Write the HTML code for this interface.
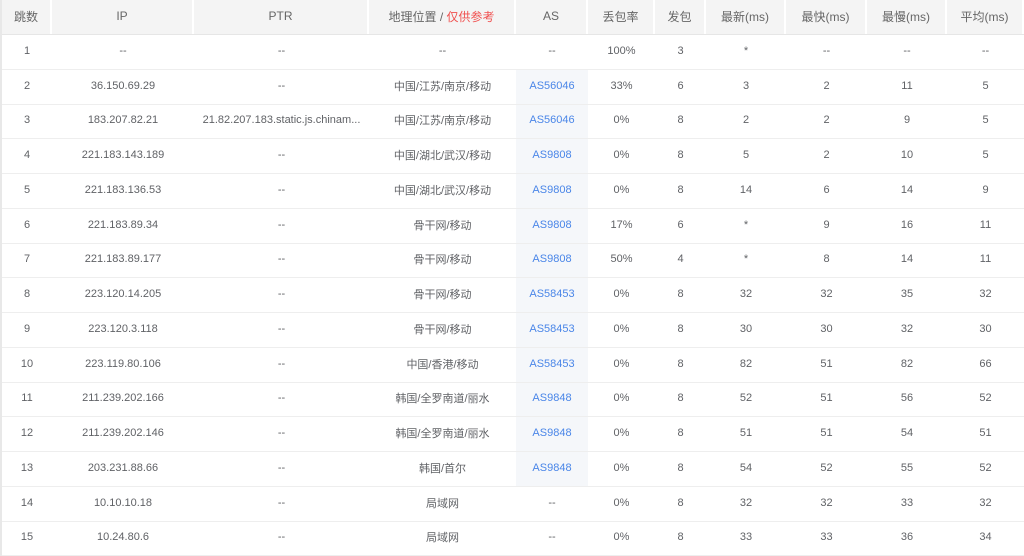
<!DOCTYPE html>
<html><head><meta charset="utf-8"><style>
body{margin:0;width:1024px;height:548px;overflow:hidden;background:#fff;font-family:"Liberation Sans","Noto Sans CJK SC",sans-serif;font-size:11px;color:#606266;}
.t{position:absolute;left:0;top:0;width:1024px;border-left:2px solid #e8e8e8;box-sizing:border-box}
.r{display:flex;height:34.75px;border-bottom:1px solid #eee;box-sizing:border-box;align-items:stretch}
.h{height:35px;background:#f4f4f4;color:#666;font-size:12px;border-bottom:1px solid #e6e6e6}
.r>div{display:flex;align-items:center;justify-content:center;box-sizing:border-box;white-space:nowrap;overflow:hidden;line-height:14px;padding-bottom:2px}
.r>div.cj{padding-bottom:0}
.h>div{border-right:2px solid #fff}
.c0{width:50px}.c1{width:142px}.c2{width:175px}.c3{width:147px}.c4{width:72px}.c5{width:67px}.c6{width:51px}.c7{width:80px}.c8{width:81px}.c9{width:80px}.c10{flex:1}
.as{background:#f5f7fa;color:#4a86e8}
.red{color:#f0504f}
</style></head><body><div class="t">
<div class="r h"><div class="c0 cj">跳数</div><div class="c1">IP</div><div class="c2">PTR</div><div class="c3 cj">地理位置&nbsp;/&nbsp;<span class="red">仅供参考</span></div><div class="c4">AS</div><div class="c5 cj">丢包率</div><div class="c6 cj">发包</div><div class="c7 cj">最新(ms)</div><div class="c8 cj">最快(ms)</div><div class="c9 cj">最慢(ms)</div><div class="c10 cj">平均(ms)</div></div>
<div class="r"><div class="c0">1</div><div class="c1">--</div><div class="c2">--</div><div class="c3">--</div><div class="c4">--</div><div class="c5">100%</div><div class="c6">3</div><div class="c7">*</div><div class="c8">--</div><div class="c9">--</div><div class="c10">--</div></div>
<div class="r"><div class="c0">2</div><div class="c1">36.150.69.29</div><div class="c2">--</div><div class="c3 cj">中国/江苏/南京/移动</div><div class="c4 as">AS56046</div><div class="c5">33%</div><div class="c6">6</div><div class="c7">3</div><div class="c8">2</div><div class="c9">11</div><div class="c10">5</div></div>
<div class="r"><div class="c0">3</div><div class="c1">183.207.82.21</div><div class="c2">21.82.207.183.static.js.chinam...</div><div class="c3 cj">中国/江苏/南京/移动</div><div class="c4 as">AS56046</div><div class="c5">0%</div><div class="c6">8</div><div class="c7">2</div><div class="c8">2</div><div class="c9">9</div><div class="c10">5</div></div>
<div class="r"><div class="c0">4</div><div class="c1">221.183.143.189</div><div class="c2">--</div><div class="c3 cj">中国/湖北/武汉/移动</div><div class="c4 as">AS9808</div><div class="c5">0%</div><div class="c6">8</div><div class="c7">5</div><div class="c8">2</div><div class="c9">10</div><div class="c10">5</div></div>
<div class="r"><div class="c0">5</div><div class="c1">221.183.136.53</div><div class="c2">--</div><div class="c3 cj">中国/湖北/武汉/移动</div><div class="c4 as">AS9808</div><div class="c5">0%</div><div class="c6">8</div><div class="c7">14</div><div class="c8">6</div><div class="c9">14</div><div class="c10">9</div></div>
<div class="r"><div class="c0">6</div><div class="c1">221.183.89.34</div><div class="c2">--</div><div class="c3 cj">骨干网/移动</div><div class="c4 as">AS9808</div><div class="c5">17%</div><div class="c6">6</div><div class="c7">*</div><div class="c8">9</div><div class="c9">16</div><div class="c10">11</div></div>
<div class="r"><div class="c0">7</div><div class="c1">221.183.89.177</div><div class="c2">--</div><div class="c3 cj">骨干网/移动</div><div class="c4 as">AS9808</div><div class="c5">50%</div><div class="c6">4</div><div class="c7">*</div><div class="c8">8</div><div class="c9">14</div><div class="c10">11</div></div>
<div class="r"><div class="c0">8</div><div class="c1">223.120.14.205</div><div class="c2">--</div><div class="c3 cj">骨干网/移动</div><div class="c4 as">AS58453</div><div class="c5">0%</div><div class="c6">8</div><div class="c7">32</div><div class="c8">32</div><div class="c9">35</div><div class="c10">32</div></div>
<div class="r"><div class="c0">9</div><div class="c1">223.120.3.118</div><div class="c2">--</div><div class="c3 cj">骨干网/移动</div><div class="c4 as">AS58453</div><div class="c5">0%</div><div class="c6">8</div><div class="c7">30</div><div class="c8">30</div><div class="c9">32</div><div class="c10">30</div></div>
<div class="r"><div class="c0">10</div><div class="c1">223.119.80.106</div><div class="c2">--</div><div class="c3 cj">中国/香港/移动</div><div class="c4 as">AS58453</div><div class="c5">0%</div><div class="c6">8</div><div class="c7">82</div><div class="c8">51</div><div class="c9">82</div><div class="c10">66</div></div>
<div class="r"><div class="c0">11</div><div class="c1">211.239.202.166</div><div class="c2">--</div><div class="c3 cj">韩国/全罗南道/丽水</div><div class="c4 as">AS9848</div><div class="c5">0%</div><div class="c6">8</div><div class="c7">52</div><div class="c8">51</div><div class="c9">56</div><div class="c10">52</div></div>
<div class="r"><div class="c0">12</div><div class="c1">211.239.202.146</div><div class="c2">--</div><div class="c3 cj">韩国/全罗南道/丽水</div><div class="c4 as">AS9848</div><div class="c5">0%</div><div class="c6">8</div><div class="c7">51</div><div class="c8">51</div><div class="c9">54</div><div class="c10">51</div></div>
<div class="r"><div class="c0">13</div><div class="c1">203.231.88.66</div><div class="c2">--</div><div class="c3 cj">韩国/首尔</div><div class="c4 as">AS9848</div><div class="c5">0%</div><div class="c6">8</div><div class="c7">54</div><div class="c8">52</div><div class="c9">55</div><div class="c10">52</div></div>
<div class="r"><div class="c0">14</div><div class="c1">10.10.10.18</div><div class="c2">--</div><div class="c3 cj">局域网</div><div class="c4">--</div><div class="c5">0%</div><div class="c6">8</div><div class="c7">32</div><div class="c8">32</div><div class="c9">33</div><div class="c10">32</div></div>
<div class="r"><div class="c0">15</div><div class="c1">10.24.80.6</div><div class="c2">--</div><div class="c3 cj">局域网</div><div class="c4">--</div><div class="c5">0%</div><div class="c6">8</div><div class="c7">33</div><div class="c8">33</div><div class="c9">36</div><div class="c10">34</div></div>
</div></body></html>
